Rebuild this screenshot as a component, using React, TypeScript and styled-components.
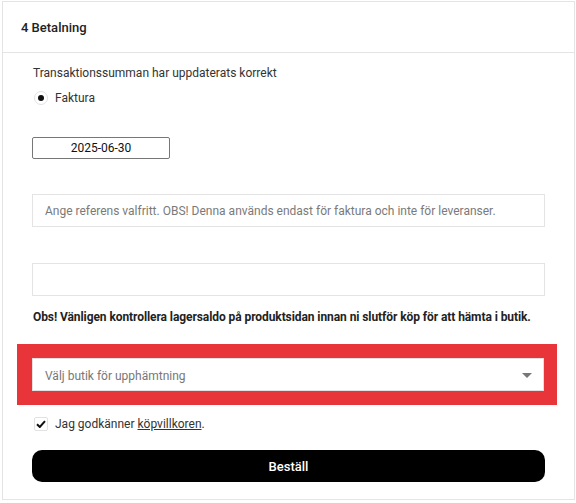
import React, { useState } from 'react';
import styled, { createGlobalStyle } from 'styled-components';

const GlobalStyle = createGlobalStyle`
  body {
    margin: 0;
    background: #fff;
    font-family: Roboto, "Liberation Sans", Arial, sans-serif;
    color: #222;
  }
  * { box-sizing: border-box; }
`;

const Card = styled.section`
  margin: 1px 2px 0 2px;
  width: 573px;
  height: 499px;
  border: 1px solid #e4e4e4;
  background: #fff;
`;

const Header = styled.div`
  height: 51px;
  display: flex;
  align-items: center;
  padding: 0 18px;
  border-bottom: 1px solid #e4e4e4;
  font-size: 13px;
  font-weight: 500;
  color: #222;
`;

const Body = styled.div`
  padding: 12px 28px 0 29px;
  display: flex;
  flex-direction: column;
`;

const Info = styled.p`
  margin: 0 0 0 1px;
  font-size: 12px;
  line-height: 16px;
  color: #333;
`;

const RadioRow = styled.label`
  display: flex;
  align-items: center;
  gap: 7px;
  margin: 9px 0 0 2px;
  font-size: 12px;
  color: #333;
  height: 16px;
`;

const RadioDot = styled.span`
  width: 14px;
  height: 14px;
  border-radius: 50%;
  border: 1px solid #e2e2e2;
  display: flex;
  align-items: center;
  justify-content: center;
  &::after {
    content: '';
    width: 6px;
    height: 6px;
    border-radius: 50%;
    background: #111;
  }
`;

const DateBox = styled.div`
  margin-top: 31px;
  width: 138px;
  height: 22px;
  border: 1px solid #777;
  border-radius: 2px;
  display: flex;
  align-items: center;
  justify-content: center;
  font-size: 12px;
  color: #111;
`;

const TextInput = styled.input<{ $top: number }>`
  margin-top: ${p => p.$top}px;
  width: 513px;
  height: 33px;
  border: 1px solid #e4e4e4;
  padding: 0 12px;
  font-family: inherit;
  font-size: 12px;
  color: #333;
  outline: none;
  &::placeholder { color: #7a7a7a; }
`;

const Notice = styled.p`
  margin: 13px 0 0 1px;
  font-size: 12px;
  line-height: 16px;
  font-weight: 700;
  letter-spacing: -0.08px;
  color: #222;
  white-space: nowrap;
`;

const Highlight = styled.div`
  margin: 19px 0 0 -15px;
  width: 540px;
  border: 14px solid #e8353a;
  border-left-width: 15px;
  border-right-width: 13px;
`;

const Select = styled.div`
  height: 33px;
  border: 1px solid #e0e0e0;
  display: flex;
  align-items: center;
  justify-content: space-between;
  padding: 2px 11px 0 12px;
  font-size: 12px;
  color: #777;
`;

const Caret = styled.span`
  width: 0;
  height: 0;
  border-left: 5px solid transparent;
  border-right: 5px solid transparent;
  border-top: 5px solid #777;
`;

const CheckRow = styled.label`
  display: flex;
  align-items: center;
  gap: 7px;
  margin: 11px 0 0 2px;
  font-size: 12px;
  color: #333;
  height: 16px;
`;

const CheckBox = styled.span`
  width: 14px;
  height: 14px;
  border: 1px solid #e2e2e2;
  border-radius: 2px;
  display: flex;
  align-items: center;
  justify-content: center;
`;

const TermsLink = styled.a`
  color: #333;
  text-decoration: underline;
`;

const OrderButton = styled.button`
  margin-top: 18px;
  width: 513px;
  height: 32px;
  border: none;
  border-radius: 10px;
  background: #000;
  color: #fff;
  font-family: inherit;
  font-size: 13px;
  font-weight: 500;
  cursor: pointer;
`;

export default function App() {
  const [reference, setReference] = useState('');
  const [extra, setExtra] = useState('');

  return (
    <>
      <GlobalStyle />
      <Card>
        <Header>4 Betalning</Header>
        <Body>
          <Info>Transaktionssumman har uppdaterats korrekt</Info>
          <RadioRow>
            <RadioDot />
            Faktura
          </RadioRow>
          <DateBox>2025-06-30</DateBox>
          <TextInput
            $top={35}
            value={reference}
            onChange={e => setReference(e.target.value)}
            placeholder="Ange referens valfritt. OBS! Denna används endast för faktura och inte för leveranser."
          />
          <TextInput $top={36} value={extra} onChange={e => setExtra(e.target.value)} />
          <Notice>
            Obs! Vänligen kontrollera lagersaldo på produktsidan innan ni slutför köp för att hämta i butik.
          </Notice>
          <Highlight>
            <Select>
              Välj butik för upphämtning
              <Caret />
            </Select>
          </Highlight>
          <CheckRow>
            <CheckBox>
              <svg width="10" height="8" viewBox="0 0 10 8">
                <path d="M1 4.2 L3.8 7 L9 1.2" fill="none" stroke="#111" strokeWidth="2" />
              </svg>
            </CheckBox>
            <span>
              Jag godkänner <TermsLink href="#">köpvillkoren</TermsLink>.
            </span>
          </CheckRow>
          <OrderButton>Beställ</OrderButton>
        </Body>
      </Card>
    </>
  );
}
